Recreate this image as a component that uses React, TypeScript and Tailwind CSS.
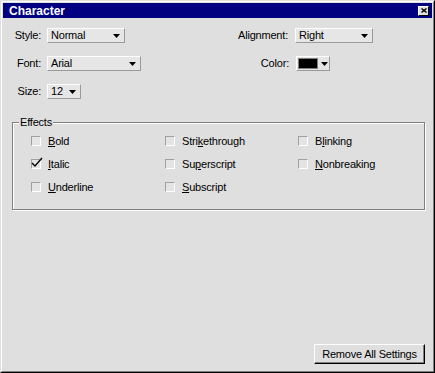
import type { ReactNode } from 'react'

function Arrow() {
  return (
    <svg width="7" height="4" viewBox="0 0 7 4" className="shrink-0">
      <path d="M0 0h7L3.5 4z" fill="#000" />
    </svg>
  )
}

function Dropdown({ value, width }: { value: string; width: string }) {
  return (
    <div
      className={`${width} h-[15px] flex items-center justify-between pl-[3px] pr-[4px] bg-[#e6e6e6] border border-t-white border-l-white border-r-[#9a9a9a] border-b-[#9a9a9a]`}
    >
      <span className="leading-none">{value}</span>
      <Arrow />
    </div>
  )
}

function Checkbox({ checked, children }: { checked?: boolean; children: ReactNode }) {
  return (
    <div className="flex items-center h-4 gap-[7px]">
      <div className="relative w-[10px] h-[10px] bg-[#e4e4e4] border border-t-[#a0a0a0] border-l-[#a0a0a0] border-r-white border-b-white">
        {checked && (
          <svg width="12" height="11" viewBox="0 0 12 11" className="absolute -left-[1px] -top-[3px]">
            <path d="M1 6l3 3 7-8" fill="none" stroke="#000" strokeWidth="1.4" />
          </svg>
        )}
      </div>
      <span className="leading-none">{children}</span>
    </div>
  )
}

export default function App() {
  return (
    <div className="w-[435px] h-[373px] bg-[#dfdfdf] border border-t-[#dfdfdf] border-l-[#dfdfdf] border-r-black border-b-black font-['Liberation_Sans',Arial,sans-serif] text-[11px] tracking-[-0.2px] text-black">
      <div className="h-full flex flex-col p-px border border-t-white border-l-white border-r-[#808080] border-b-[#808080]">
        <div className="h-[15px] bg-[#000080] flex items-center justify-between pl-[6px] pr-[3px]">
          <span className="text-white font-bold text-[12px] tracking-normal leading-none">Character</span>
          <div className="w-[11px] h-[10px] flex items-center justify-center bg-[#dfdfdf] border border-t-white border-l-white border-r-black border-b-black">
            <svg width="6" height="5" viewBox="0 0 6 5">
              <path d="M0.5 0.5l5 4M5.5 0.5l-5 4" stroke="#000" strokeWidth="1.4" />
            </svg>
          </div>
        </div>

        <div className="flex-1 flex flex-col">
          <div className="mt-[10px] flex flex-col gap-[13px]">
            <div className="flex items-center h-[15px]">
              <div className="w-[225px] flex items-center">
                <span className="w-[44px] text-right pr-[6px]">Style:</span>
                <Dropdown value="Normal" width="w-[78px]" />
              </div>
              <span className="w-[67px] text-right pr-[7px]">Alignment:</span>
              <Dropdown value="Right" width="w-[78px]" />
            </div>
            <div className="flex items-center h-[15px]">
              <div className="w-[225px] flex items-center">
                <span className="w-[44px] text-right pr-[6px]">Font:</span>
                <Dropdown value="Arial" width="w-[94px]" />
              </div>
              <span className="w-[68px] text-right pr-[7px]">Color:</span>
              <div className="w-[34px] h-[15px] flex items-center gap-[3px] pl-px bg-[#e6e6e6] border border-t-white border-l-white border-r-[#9a9a9a] border-b-[#9a9a9a]">
                <div className="w-[20px] h-[11px] bg-black border border-[#808080]" />
                <Arrow />
              </div>
            </div>
            <div className="flex items-center h-[15px]">
              <span className="w-[44px] text-right pr-[6px]">Size:</span>
              <Dropdown value="12" width="w-[34px]" />
            </div>
          </div>

          <div className="relative mt-[23px] ml-[9px] w-[413px] h-[88px] border border-[#808080] shadow-[1px_1px_0_#fff,inset_1px_1px_0_#fff]">
            <span className="absolute left-[6px] -top-[8px] px-px bg-[#dfdfdf] leading-[14px]">Effects</span>
            <div className="grid grid-cols-[134px_133px_1fr] gap-y-[7px] pt-[10px] pl-[18px]">
              <Checkbox><u>B</u>old</Checkbox>
              <Checkbox>Stri<u>k</u>ethrough</Checkbox>
              <Checkbox>B<u>l</u>inking</Checkbox>
              <Checkbox checked><u>I</u>talic</Checkbox>
              <Checkbox>Su<u>p</u>erscript</Checkbox>
              <Checkbox><u>N</u>onbreaking</Checkbox>
              <Checkbox><u>U</u>nderline</Checkbox>
              <Checkbox><u>S</u>ubscript</Checkbox>
            </div>
          </div>

          <button className="mt-auto self-end mr-[7px] mb-[6px] w-[111px] h-[20px] bg-[#dfdfdf] border border-t-white border-l-white border-r-black border-b-black shadow-[inset_-1px_-1px_0_#808080] leading-none">
            Remove All Settings
          </button>
        </div>
      </div>
    </div>
  )
}
